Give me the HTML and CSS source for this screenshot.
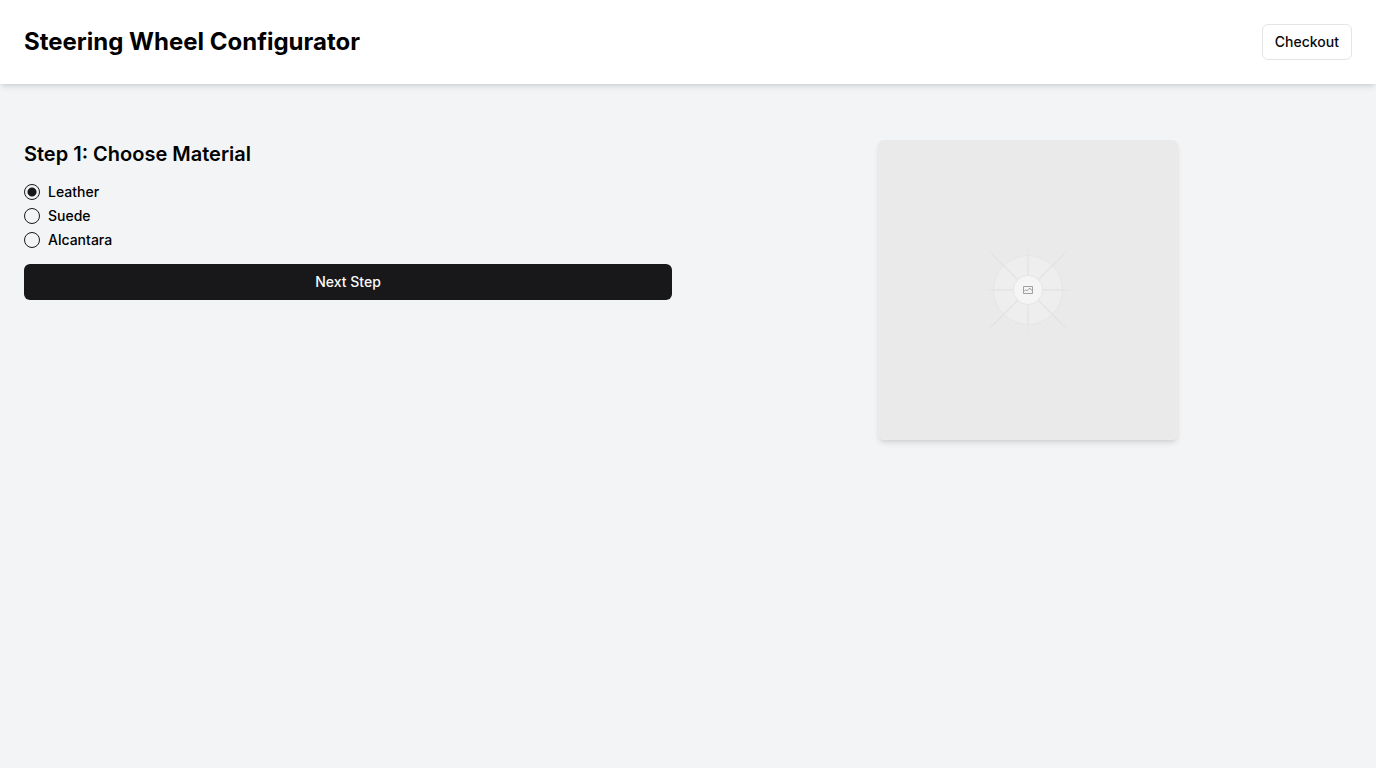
FILE: index.html
```html
<!DOCTYPE html>
<html lang="en">
<head>
<meta charset="utf-8">
<meta name="viewport" content="width=device-width, initial-scale=1">
<title>Steering Wheel Configurator</title>
<link rel="stylesheet" href="styles.css">
</head>
<body>
<header class="header">
  <h1 class="title">Steering Wheel Configurator</h1>
  <button class="btn btn-outline" type="button">Checkout</button>
</header>
<main class="main">
  <form class="step">
    <h2 class="step-title" id="step-title">Step 1: Choose Material</h2>
    <div class="options" role="radiogroup" aria-labelledby="step-title">
      <div class="option"><input class="radio" type="radio" name="material" id="leather" checked><label for="leather">Leather</label></div>
      <div class="option"><input class="radio" type="radio" name="material" id="suede"><label for="suede">Suede</label></div>
      <div class="option"><input class="radio" type="radio" name="material" id="alcantara"><label for="alcantara">Alcantara</label></div>
    </div>
    <button class="btn btn-primary" type="button">Next Step</button>
  </form>
  <section class="preview">
    <svg class="preview-image" viewBox="0 0 300 300" role="img" aria-label="Steering wheel preview">
      <defs>
        <radialGradient id="fade-straight" gradientUnits="userSpaceOnUse" cx="150" cy="150" r="44">
          <stop offset="0.75" stop-color="#e3e3e3"/>
          <stop offset="1" stop-color="#e3e3e3" stop-opacity="0"/>
        </radialGradient>
        <radialGradient id="fade-diagonal" gradientUnits="userSpaceOnUse" cx="150" cy="150" r="58">
          <stop offset="0.85" stop-color="#e2e2e2"/>
          <stop offset="1" stop-color="#e2e2e2" stop-opacity="0"/>
        </radialGradient>
      </defs>
      <rect width="300" height="300" fill="#eaeaea"/>
      <circle cx="150" cy="150" r="34.5" fill="#eeeeee" stroke="#e5e5e5"/>
      <g fill="none" stroke-width="1.3">
        <path d="M150 106 L150.01 194M106 150 L194 150.01" stroke="url(#fade-straight)"/>
        <path d="M110 110l80 80M190 110l-80 80" stroke="url(#fade-diagonal)"/>
      </g>
      <circle cx="150" cy="150" r="14.5" fill="#f5f5f5" stroke="#e5e5e5"/>
      <g fill="none" stroke="#a0a0a0" stroke-width="1">
        <path d="M145.5 146.5h9v7h-9z"/>
        <path d="M146 151.3l1.5-1.3 1.8.8 1.5-2 1.5-.4 .8 1.6h1.2" stroke="#a4a4a4"/>
      </g>
    </svg>
  </section>
</main>
</body>
</html>
```
FILE: styles.css
```css
* { box-sizing: border-box; }
body {
  margin: 0;
  min-height: 100vh;
  background: #f3f4f6;
  color: #000;
  font-family: Inter, "Liberation Sans", sans-serif;
  font-size: 14px;
  line-height: 20px;
}
.header {
  display: flex;
  align-items: center;
  justify-content: space-between;
  padding: 24px;
  background: #fff;
  box-shadow: 0 4px 6px -1px rgb(0 0 0 / 0.1), 0 2px 4px -2px rgb(0 0 0 / 0.1);
}
.title { margin: 0; font-size: 24px; line-height: 32px; font-weight: 700; }
.btn {
  height: 36px;
  padding: 0 12px;
  border: 1px solid transparent;
  border-radius: 6px;
  font: inherit;
  font-weight: 500;
  cursor: pointer;
}
.btn-outline { background: #fff; border-color: #e4e4e7; color: #09090b; }
.btn-primary { background: #18181b; color: #fafafa; }
.main {
  display: grid;
  grid-template-columns: 1fr 1fr;
  gap: 32px;
  padding: 56px 24px 24px;
}
.step { display: flex; flex-direction: column; gap: 16px; }
.step-title { margin: 0; font-size: 20px; line-height: 28px; font-weight: 600; }
.options { display: grid; gap: 8px; }
.option { display: flex; align-items: center; gap: 8px; font-weight: 500; line-height: 16px; }
.radio {
  appearance: none;
  width: 16px;
  height: 16px;
  margin: 0;
  border: 1px solid #18181b;
  border-radius: 50%;
}
.radio:checked { background: radial-gradient(circle, #18181b 4px, transparent 5px); }
.preview { display: flex; justify-content: center; align-items: flex-start; }
.preview-image {
  display: block;
  width: 300px;
  max-width: 100%;
  border-radius: 6px;
  box-shadow: 0 4px 6px -1px rgb(0 0 0 / 0.1), 0 2px 4px -2px rgb(0 0 0 / 0.1);
}
```
